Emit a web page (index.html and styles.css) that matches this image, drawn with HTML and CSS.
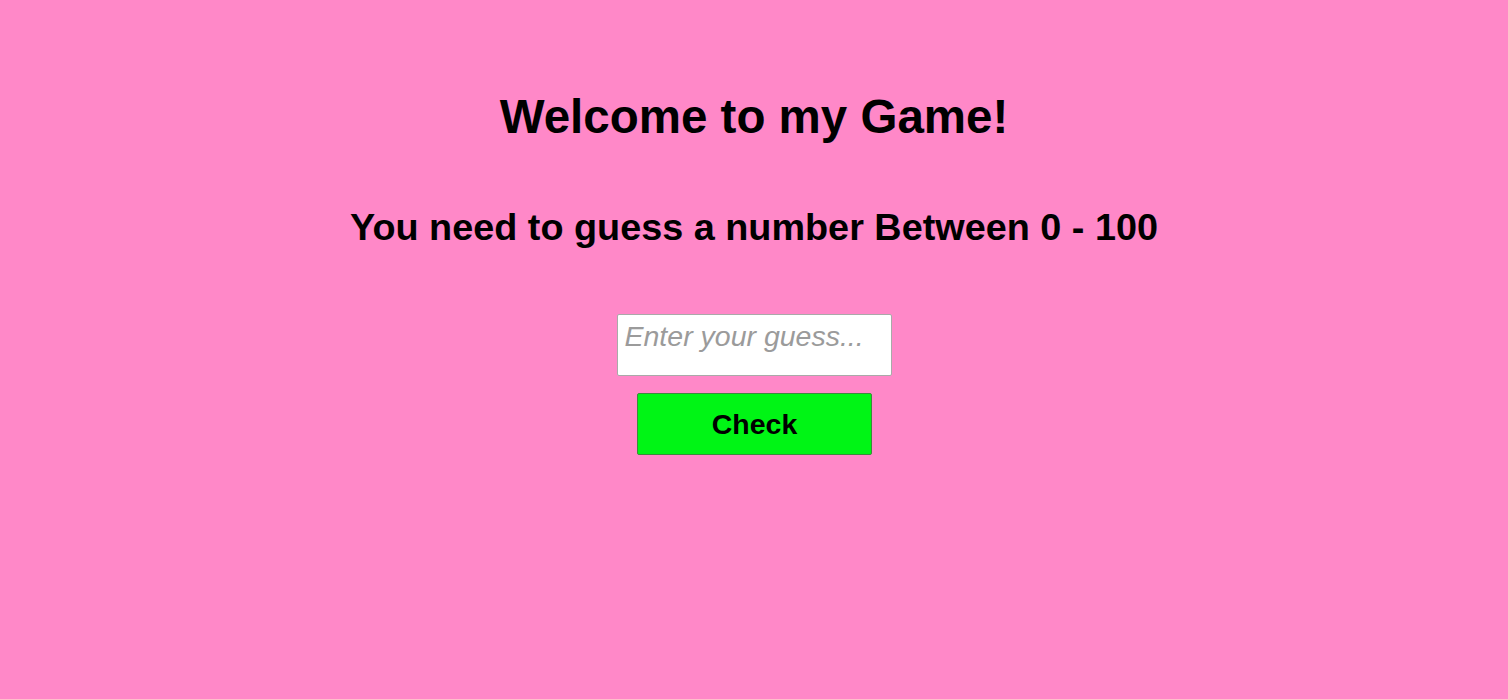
FILE: index.html
```html
<!DOCTYPE html>
<html>
<head>
<meta charset="utf-8">
<title>Guess Game</title>
<link rel="stylesheet" href="styles.css">
</head>
<body>
<main class="game">
  <h1 class="title">Welcome to my Game!</h1>
  <h2 class="subtitle">You need to guess a number Between 0 - 100</h2>
  <textarea class="guess" placeholder="Enter your guess..."></textarea>
  <button class="check">Check</button>
</main>
</body>
</html>
```
FILE: styles.css
```css
html, body {
  margin: 0;
  padding: 0;
  background: #ff88c8;
  font-family: "Liberation Sans", Arial, sans-serif;
}
.game {
  display: flex;
  flex-direction: column;
  align-items: center;
  padding-top: 89px;
}
.title {
  margin: 0;
  font-size: 47.5px;
  line-height: 56px;
  font-weight: bold;
  color: #000;
}
.subtitle {
  margin: 59px 0 0;
  font-size: 37.8px;
  line-height: 46px;
  font-weight: bold;
  color: #000;
}
.guess {
  margin-top: 64px;
  width: 275px;
  height: 62px;
  box-sizing: border-box;
  border: 1px solid #a9a9a9;
  border-radius: 2px;
  background: #fff;
  padding: 5px 7px;
  font-family: "Liberation Sans", Arial, sans-serif;
  font-size: 28.5px;
  resize: none;
  overflow: hidden;
}
.guess::placeholder {
  color: #9b9b9b;
  font-style: italic;
}
.check {
  margin: 17px 0 0 1px;
  width: 235px;
  height: 62px;
  box-sizing: border-box;
  background: #00f515;
  border: 1px solid #3c8a3c;
  border-radius: 2px;
  font-family: "Liberation Sans", Arial, sans-serif;
  font-size: 28.5px;
  font-weight: bold;
  color: #000;
}
```
